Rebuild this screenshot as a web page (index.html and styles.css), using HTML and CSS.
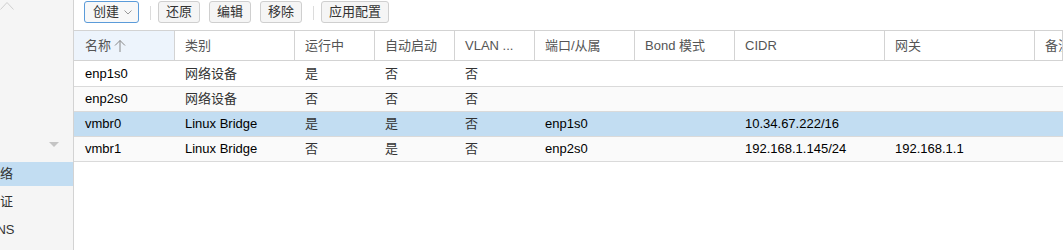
FILE: index.html
```html
<!DOCTYPE html>
<html lang="zh-CN">
<head>
  <meta charset="UTF-8" />
  <title>网络</title>
  <link rel="stylesheet" href="styles.css">
</head>
<body>
  <div class="app">
    <aside class="nav">
      <div class="nav-head">
        <svg class="nav-up" width="14" height="10" viewBox="0 0 14 10"><polyline points="0.5,9.5 7,2.5 13.5,9.5" fill="none" stroke="#cfcfcf" stroke-width="1"/></svg>
        <svg class="nav-down" width="10" height="6" viewBox="0 0 10 6"><polygon points="0,0 10,0 5,5" fill="#c4c4c4"/></svg>
      </div>
      <div class="nav-item active"><span>网络</span></div>
      <div class="nav-item"><span>验证</span></div>
      <div class="nav-item"><span>DNS</span></div>
    </aside>

    <main class="panel">
      <div class="toolbar">
        <button class="btn btn-menu"><span>创建</span>
          <svg width="8" height="5" viewBox="0 0 8 5"><polyline points="0.5,0.5 4,4 7.5,0.5" fill="none" stroke="#999" stroke-width="1"/></svg>
        </button>
        <span class="sep"></span>
        <button class="btn">还原</button>
        <button class="btn">编辑</button>
        <button class="btn">移除</button>
        <span class="sep"></span>
        <button class="btn">应用配置</button>
      </div>

      <div class="grid">
        <div class="row head">
          <div class="cell sorted">名称
            <svg class="sort" width="12" height="13" viewBox="0 0 12 13"><path d="M6 1.5V13M1 6.5L6 1.5L11 6.5" fill="none" stroke="#888" stroke-width="1"/></svg>
          </div>
          <div class="cell">类别</div>
          <div class="cell">运行中</div>
          <div class="cell">自动启动</div>
          <div class="cell">VLAN ...</div>
          <div class="cell">端口/从属</div>
          <div class="cell">Bond 模式</div>
          <div class="cell">CIDR</div>
          <div class="cell">网关</div>
          <div class="cell">备注</div>
        </div>

        <div class="rows">
          <div class="row">
            <div class="cell">enp1s0</div>
            <div class="cell cjk">网络设备</div>
            <div class="cell cjk">是</div>
            <div class="cell cjk">否</div>
            <div class="cell cjk">否</div>
            <div class="cell"></div>
            <div class="cell"></div>
            <div class="cell"></div>
            <div class="cell"></div>
            <div class="cell"></div>
          </div>
          <div class="row alt">
            <div class="cell">enp2s0</div>
            <div class="cell cjk">网络设备</div>
            <div class="cell cjk">否</div>
            <div class="cell cjk">否</div>
            <div class="cell cjk">否</div>
            <div class="cell"></div>
            <div class="cell"></div>
            <div class="cell"></div>
            <div class="cell"></div>
            <div class="cell"></div>
          </div>
          <div class="row selected">
            <div class="cell">vmbr0</div>
            <div class="cell">Linux Bridge</div>
            <div class="cell cjk">是</div>
            <div class="cell cjk">是</div>
            <div class="cell cjk">否</div>
            <div class="cell">enp1s0</div>
            <div class="cell"></div>
            <div class="cell">10.34.67.222/16</div>
            <div class="cell"></div>
            <div class="cell"></div>
          </div>
          <div class="row alt">
            <div class="cell">vmbr1</div>
            <div class="cell">Linux Bridge</div>
            <div class="cell cjk">否</div>
            <div class="cell cjk">是</div>
            <div class="cell cjk">否</div>
            <div class="cell">enp2s0</div>
            <div class="cell"></div>
            <div class="cell">192.168.1.145/24</div>
            <div class="cell">192.168.1.1</div>
            <div class="cell"></div>
          </div>
        </div>
      </div>
    </main>
  </div>
</body>
</html>
```

FILE: styles.css
```css
body { margin: 0; font-family: "Liberation Sans", "Noto Sans CJK SC", sans-serif; font-size: 13px; color: #000; background: #fff; }
.app { display: flex; width: 1063px; height: 250px; overflow: hidden; }

.nav { width: 74px; flex: none; box-sizing: border-box; background: #f5f5f5; border-right: 1px solid #d3d3d3; overflow: hidden; }
.nav-head { height: 162px; display: flex; flex-direction: column; justify-content: space-between; box-sizing: border-box; padding-bottom: 14px; }
.nav-up { display: block; margin-top: 0; }
.nav-down { display: block; align-self: flex-end; margin-right: 14px; }
.nav-item { height: 24px; line-height: 24px; margin-bottom: 4px; color: #333; white-space: nowrap; }
.nav-item span { display: block; margin-left: -13px; }
.nav-item.active { background: #c2ddf2; }

.panel { flex: 1; display: flex; flex-direction: column; min-width: 0; }

.toolbar { height: 30px; box-sizing: border-box; display: flex; align-items: flex-start; gap: 9px; padding: 1px 0 0 10px; }
.btn { height: 22px; box-sizing: border-box; padding: 0 7px; border: 1px solid #cfcfcf; border-radius: 3px; background: #f5f5f5; color: #333; font-family: inherit; font-size: 13px; line-height: 20px; white-space: nowrap; }
.btn-menu { display: flex; align-items: center; gap: 5px; padding: 0 6px 0 8px; border-color: #5b9bd9; background: #f8f8f8; }
.btn-menu svg { display: block; }
.sep { width: 1px; height: 14px; margin: 5px -2px 0 2px; background: #dcdcdc; }

.grid { border-top: 1px solid #d3d3d3; }
.row { display: grid; grid-template-columns: 101px 120px 80px 80px 80px 100px 100px 150px 150px 1fr; height: 25px; box-sizing: border-box; border-bottom: 1px solid #dadada; }
.row .cell { padding-left: 10px; line-height: 24px; white-space: nowrap; overflow: hidden; }
.row .cell:first-child { padding-left: 11px; }
.cjk { color: #333; }

.head { height: 30px; border-bottom: 1px solid #d3d3d3; }
.head .cell { line-height: 29px; color: #555; border-right: 1px solid #d3d3d3; display: flex; align-items: center; gap: 3px; }
.head .sorted { background: #edf4fc; }
.sort { display: block; margin-top: -1px; }

.rows { padding-top: 1px; }
.alt { background: #fafafa; }
.selected { background: #c2ddf2; }
```
